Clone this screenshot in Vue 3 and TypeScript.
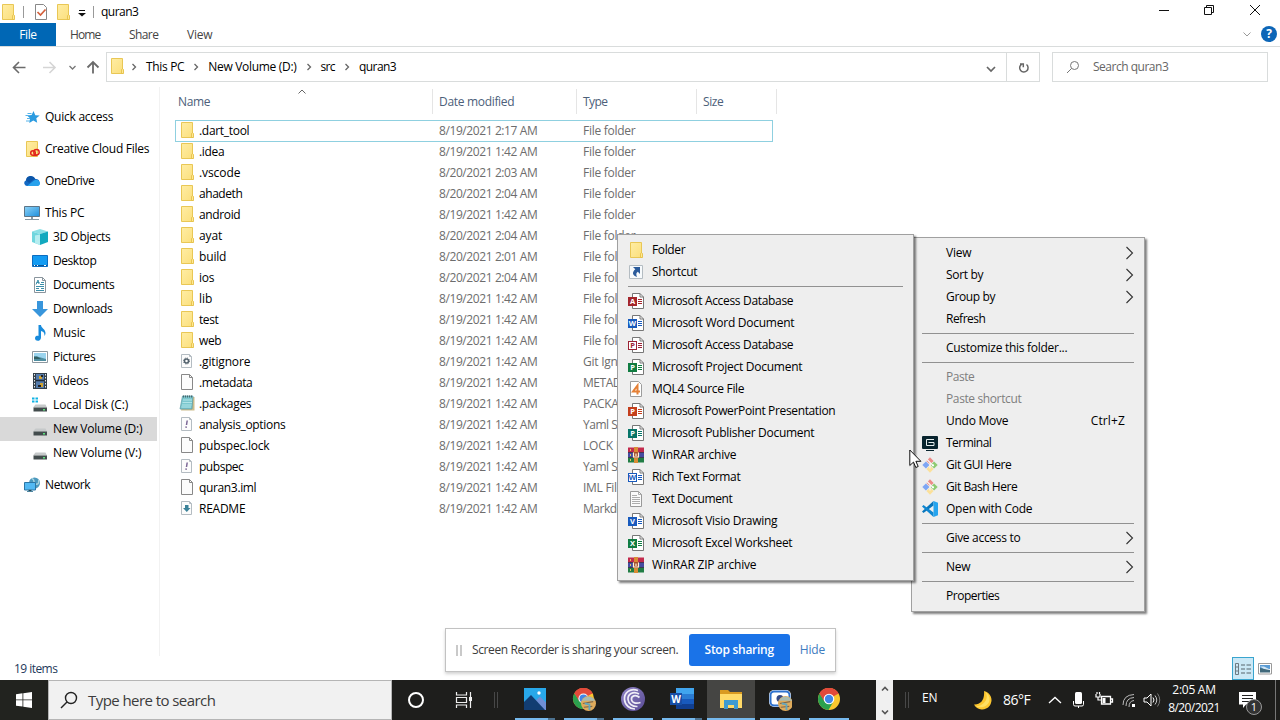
<script setup lang="ts">
import { ref, computed } from 'vue';

interface NavItem {
    icon: string;
    label: string;
    width: number;
    nested?: boolean;
    gap?: boolean;
    active?: boolean;
}

interface FileRow {
    icon: string;
    name: string;
    width: number;
    date: string;
    type: string;
    typeWidth: number;
}

interface MenuItem {
    label?: string;
    width?: number;
    icon?: string;
    badge?: { letter: string; color: string; outline?: boolean };
    disabled?: boolean;
    arrow?: boolean;
    shortcut?: string;
    separator?: boolean;
}

const vFit = {
    mounted: (el: HTMLElement, binding: { value: number }) => {
        const length = (el.textContent || '').length;
        if (!binding.value || !length) return;
        const width = el.getBoundingClientRect().width;
        el.style.letterSpacing = `${(binding.value + 0.3 - width) / length}px`;
    },
};

const navItems: NavItem[] = [
    { icon: 'star', label: 'Quick access', width: 68 },
    { icon: 'creative', label: 'Creative Cloud Files', width: 104, gap: true },
    { icon: 'onedrive', label: 'OneDrive', width: 49, gap: true },
    { icon: 'pc', label: 'This PC', width: 39, gap: true },
    { icon: 'cube', label: '3D Objects', width: 57, nested: true },
    { icon: 'desktop', label: 'Desktop', width: 43, nested: true },
    { icon: 'documents', label: 'Documents', width: 61, nested: true },
    { icon: 'download', label: 'Downloads', width: 59, nested: true },
    { icon: 'music', label: 'Music', width: 32, nested: true },
    { icon: 'picture', label: 'Pictures', width: 42, nested: true },
    { icon: 'video', label: 'Videos', width: 35, nested: true },
    { icon: 'disk-win', label: 'Local Disk (C:)', width: 75, nested: true },
    { icon: 'disk', label: 'New Volume (D:)', width: 89, nested: true, active: true },
    { icon: 'disk', label: 'New Volume (V:)', width: 88, nested: true },
    { icon: 'network', label: 'Network', width: 45, gap: true },
];

const folder = (name: string, width: number, date: string): FileRow => ({
    icon: 'folder', name, width, date, type: 'File folder', typeWidth: 52,
});

const files = ref<FileRow[]>([
    folder('.dart_tool', 50, '8/19/2021 2:17 AM'),
    folder('.idea', 25, '8/19/2021 1:42 AM'),
    folder('.vscode', 41, '8/20/2021 2:03 AM'),
    folder('ahadeth', 43, '8/20/2021 2:04 AM'),
    folder('android', 41, '8/19/2021 1:42 AM'),
    folder('ayat', 23, '8/20/2021 2:04 AM'),
    folder('build', 27, '8/20/2021 2:01 AM'),
    folder('ios', 15, '8/20/2021 2:04 AM'),
    folder('lib', 13, '8/19/2021 1:42 AM'),
    folder('test', 19, '8/19/2021 1:42 AM'),
    folder('web', 22, '8/19/2021 1:42 AM'),
    { icon: 'gear-file', name: '.gitignore', width: 51, date: '8/19/2021 1:42 AM', type: 'Git Ignore Source ...', typeWidth: 104 },
    { icon: 'file', name: '.metadata', width: 53, date: '8/19/2021 1:42 AM', type: 'METADATA File', typeWidth: 78 },
    { icon: 'notes', name: '.packages', width: 52, date: '8/19/2021 1:42 AM', type: 'PACKAGES File', typeWidth: 76 },
    { icon: 'yaml', name: 'analysis_options', width: 86, date: '8/19/2021 1:42 AM', type: 'Yaml Source File', typeWidth: 83 },
    { icon: 'file', name: 'pubspec.lock', width: 70, date: '8/19/2021 1:42 AM', type: 'LOCK File', typeWidth: 51 },
    { icon: 'yaml', name: 'pubspec', width: 44, date: '8/19/2021 1:42 AM', type: 'Yaml Source File', typeWidth: 83 },
    { icon: 'file', name: 'quran3.iml', width: 57, date: '8/19/2021 1:42 AM', type: 'IML File', typeWidth: 40 },
    { icon: 'markdown', name: 'README', width: 46, date: '8/19/2021 1:42 AM', type: 'Markdown Source...', typeWidth: 102 },
]);
const selected = ref('.dart_tool');
const itemCount = computed(() => `${files.value.length} items`);

const newMenu: MenuItem[] = [
    { label: 'Folder', width: 33, icon: 'folder' },
    { label: 'Shortcut', width: 45, icon: 'shortcut' },
    { separator: true },
    { label: 'Microsoft Access Database', width: 141, badge: { letter: 'A', color: '#a4262c' } },
    { label: 'Microsoft Word Document', width: 142, badge: { letter: 'W', color: '#185abd' } },
    { label: 'Microsoft Access Database', width: 141, badge: { letter: 'P', color: '#9b2335', outline: true } },
    { label: 'Microsoft Project Document', width: 150, badge: { letter: 'P', color: '#107c41' } },
    { label: 'MQL4 Source File', width: 92, icon: 'mql' },
    { label: 'Microsoft PowerPoint Presentation', width: 183, badge: { letter: 'P', color: '#c43e1c' } },
    { label: 'Microsoft Publisher Document', width: 162, badge: { letter: 'P', color: '#077568' } },
    { label: 'WinRAR archive', width: 84, icon: 'rar' },
    { label: 'Rich Text Format', width: 88, badge: { letter: 'W', color: '#185abd', outline: true } },
    { label: 'Text Document', width: 80, icon: 'text' },
    { label: 'Microsoft Visio Drawing', width: 125, badge: { letter: 'V', color: '#185abd' } },
    { label: 'Microsoft Excel Worksheet', width: 140, badge: { letter: 'X', color: '#107c41' } },
    { label: 'WinRAR ZIP archive', width: 104, icon: 'rar' },
];

const contextMenu: MenuItem[] = [
    { label: 'View', width: 25, arrow: true },
    { label: 'Sort by', width: 37, arrow: true },
    { label: 'Group by', width: 49, arrow: true },
    { label: 'Refresh', width: 39 },
    { separator: true },
    { label: 'Customize this folder...', width: 121 },
    { separator: true },
    { label: 'Paste', width: 28, disabled: true },
    { label: 'Paste shortcut', width: 75, disabled: true },
    { label: 'Undo Move', width: 62, shortcut: 'Ctrl+Z' },
    { label: 'Terminal', width: 45, icon: 'terminal' },
    { label: 'Git GUI Here', width: 65, icon: 'git' },
    { label: 'Git Bash Here', width: 71, icon: 'git' },
    { label: 'Open with Code', width: 86, icon: 'vscode' },
    { separator: true },
    { label: 'Give access to', width: 74, arrow: true },
    { separator: true },
    { label: 'New', width: 24, arrow: true },
    { separator: true },
    { label: 'Properties', width: 53 },
];

const menus = [
    { name: 'context', items: contextMenu },
    { name: 'new', items: newMenu },
];

const crumbs = [
    { label: 'This PC', width: 38 },
    { label: 'New Volume (D:)', width: 88 },
    { label: 'src', width: 14 },
    { label: 'quran3', width: 37 },
];

const apps = [
    { icon: 'app-photos', stacked: true },
    { icon: 'app-chrome-user', stacked: true },
    { icon: 'app-torrent' },
    { icon: 'app-word', stacked: true, letter: 'W' },
    { icon: 'app-explorer', active: true },
    { icon: 'app-recorder' },
    { icon: 'app-chrome' },
];
</script>

<template>
    <div class="screen">
        <svg class="sprite" width="0" height="0">
            <defs>
                <linearGradient id="g-blue" x1="0" y1="0" x2="1" y2="1">
                    <stop offset="0" stop-color="#8fd3f7" /><stop offset="1" stop-color="#1c8fdc" />
                </linearGradient>
                <linearGradient id="g-folder" x1="0" y1="0" x2="1" y2="1">
                    <stop offset="0" stop-color="#ffeda4" /><stop offset="1" stop-color="#fbdf7c" />
                </linearGradient>
                <linearGradient id="g-torrent" x1="0" y1="0" x2="1" y2="1">
                    <stop offset="0" stop-color="#8f83c4" /><stop offset="1" stop-color="#594b95" />
                </linearGradient>
            </defs>
            <symbol id="folder" viewBox="0 0 16 16">
                <path d="M2.500.5h11v10.800l.5.500v3.700H2.500z" fill="url(#g-folder)" stroke="#e9c755" />
                <path d="M12.500 15.500v-4l1-.7 1 .7v4z" fill="#ffe991" stroke="#e3bd42" stroke-width=".8" />
            </symbol>
            <symbol id="star" viewBox="0 0 16 16">
                <path d="M9.500 2l1.800 4.200 4.400.2-3.400 2.900.9 4.500-3.900-2.200L5.300 14l.8-4.700L3 6.500l4.600-.4z" fill="#2b9be0" />
                <path d="M3.500 4.500h4M1.500 6.500H5M3 9.500h3M2 12h4" stroke="#56b4ea" />
            </symbol>
            <symbol id="creative" viewBox="0 0 16 16">
                <path d="M2.500.5h11v15h-11z" fill="url(#g-folder)" stroke="#e9c755" />
                <circle cx="9" cy="12" r="2.300" fill="none" stroke="#e1261c" stroke-width="1.500" />
                <circle cx="12.500" cy="11.300" r="2.700" fill="none" stroke="#e1261c" stroke-width="1.500" />
                <path d="M9 14.500h4" stroke="#e1261c" stroke-width="1.300" />
            </symbol>
            <symbol id="onedrive" viewBox="0 0 16 16">
                <path d="M3 13a3 3 0 0 1-.8-5.800A5 5 0 0 1 11.500 6a3.600 3.600 0 0 1 1.500 7z" fill="#1268c3" />
                <path d="M2 7.200a4.800 4.800 0 0 1 9-1.700L5 10z" fill="#0c55a8" />
                <path d="M3 13l7-5.500a4 4 0 0 1 5.500 1.200A2.700 2.700 0 0 1 13 13z" fill="#27a1ec" />
            </symbol>
            <symbol id="pc" viewBox="0 0 16 16">
                <path d="M.5 1.500h15v10H.5z" fill="url(#g-blue)" stroke="#5d7587" />
                <path d="M7 12h2v2H7zM1 14h14v1H1z" fill="#8899a3" />
            </symbol>
            <symbol id="cube" viewBox="0 0 16 16">
                <path d="M0 2.500L8 0l8 2.500L8 5z" fill="#8be0e6" />
                <path d="M0 2.500L8 5v11l-8-3z" fill="#6fd6de" /><path d="M8 5l8-2.500V13l-8 3z" fill="#12a9bf" />
                <path d="M3 6.500l5-1V16l-5-2z" fill="#b5edf0" />
            </symbol>
            <symbol id="desktop" viewBox="0 0 16 16">
                <path d="M.5 2.500h15v11H.5z" fill="#139bf2" stroke="#0b6dc1" />
                <path d="M1 12.500h14" stroke="#0a5599" /><path d="M2 12.500h1M5 12.500h1M12 12.500h2" stroke="#fff" />
            </symbol>
            <symbol id="documents" viewBox="0 0 16 16">
                <path d="M2.500.5h8l3 3v12h-11z" fill="#fff" stroke="#8a959d" /><path d="M10.500.5v3h3" fill="none" stroke="#8a959d" />
                <path d="M4 7.500L6 3l1 4M4.500 5.500h3M9 5.500h3M8 7.500h4M4 9.500h8M4 13.500h8M4 11.500h3M9 11.500h3" fill="none" stroke="#3b8ea9" />
            </symbol>
            <symbol id="download" viewBox="0 0 16 16"><path d="M5 0h6v8h5l-8 8-8-8h5z" fill="#3896dc" /></symbol>
            <symbol id="music" viewBox="0 0 16 16"><path d="M6.500 0H9c0 3 4.500 4 4.500 8 0 1.500-.7 2.500-1.200 3C13 7.500 11 6.500 9 6v6.500c0 4.300-6 4.300-6 .8C3 10.500 6 10.500 6.500 11z" fill="#188bdc" /></symbol>
            <symbol id="picture" viewBox="0 0 16 16">
                <path d="M.5 2.500h15v11H.5z" fill="#fff" stroke="#8d989f" /><path d="M2 4h12v8H2z" fill="#9bd4ee" />
                <path d="M2 7l5 1 7 2v2H2z" fill="#4f8ea0" /><path d="M2 8l3-.5 4 2.500H2z" fill="#315f63" />
            </symbol>
            <symbol id="video" viewBox="0 0 16 16">
                <path d="M1 0h14v16H1z" fill="#333f49" /><path d="M4 1h8v14H4z" fill="#557cad" />
                <path d="M4 7.500h8" stroke="#1d2b3b" stroke-width="1.500" /><path d="M7 3h3v3H7zM8 10h3v4H8z" fill="#d0a230" /><path d="M9 2h2v2H9zM6 12h3v2H6z" fill="#232323" />
                <path d="M2.500 1v15M13.500 1v15" stroke="#e6eaec" stroke-dasharray="1.500 1.500" />
            </symbol>
            <symbol id="disk" viewBox="0 0 16 16">
                <path d="M3.500 7.500h10l1.500 3H1z" fill="#c6c9ca" /><path d="M1.500 10.500h13.500v4H1.500z" fill="#434c4d" /><path d="M11 12h2v1.500h-2z" fill="#5de27c" />
            </symbol>
            <symbol id="disk-win" viewBox="0 0 16 16">
                <path d="M3.500 7.500h10l1.500 3H1z" fill="#c6c9ca" /><path d="M1.500 10.500h13.500v4H1.500z" fill="#434c4d" /><path d="M11 12h2v1.500h-2z" fill="#5de27c" />
                <path d="M0 .5h2.500v2H0zM3.500.5H6v2H3.500zM0 3.500h2.500v2H0zM3.500 3.500H6v2H3.500z" fill="#12b3e4" />
            </symbol>
            <symbol id="network" viewBox="0 0 16 16">
                <circle cx="10.500" cy="6" r="5.500" fill="#4b98bd" /><path d="M8 1.500C12 3 8 6 12 7s2-4 3-4" fill="none" stroke="#a7d3df" stroke-width="1.500" />
                <path d="M.5 5.500h11v7.500H.5z" fill="#52b9f3" stroke="#2c76a5" /><path d="M4.500 13h3v1.500h-3zM3 14.500h6" stroke="#50869f" />
            </symbol>
            <symbol id="file" viewBox="0 0 16 16"><path d="M2.500.5h8l3 3v12h-11z" fill="#fcfcfc" stroke="#888" /><path d="M10.500.5v3h3" fill="none" stroke="#888" /></symbol>
            <symbol id="small-page" viewBox="0 0 16 16"><path d="M2.500 1.500h8l2 2v11h-10z" fill="#fcfcfc" stroke="#b4bcc2" /><path d="M10.500 1.500v2h2" fill="none" stroke="#b4bcc2" /></symbol>
            <symbol id="gear-file" viewBox="0 0 16 16">
                <use href="#small-page" /><circle cx="7.500" cy="8" r="2" fill="none" stroke="#52616c" stroke-width="1.500" />
                <circle cx="7.500" cy="8" r="3" fill="none" stroke="#52616c" stroke-dasharray="1.180 1.180" />
            </symbol>
            <symbol id="yaml" viewBox="0 0 16 16"><use href="#small-page" /><path d="M8.200 4.500L7.500 9M7.200 10.300l-.2 1.500" stroke="#7b6796" stroke-width="1.500" /></symbol>
            <symbol id="markdown" viewBox="0 0 16 16"><use href="#small-page" /><path d="M6 5h3.500v3h2l-3.700 4L4 8h2z" fill="#3b8299" /></symbol>
            <symbol id="notes" viewBox="0 0 16 16">
                <path d="M4 2h11.500v13.500H2z" fill="#cdbd8d" /><path d="M3.500 1H14l-1 13H1z" fill="#7bc7ce" stroke="#5a9aa3" stroke-width=".7" />
                <path d="M4 5h9M3.500 7.500H13M3 10h9.500M2.500 12H12" stroke="#b1e4e7" /><path d="M4 1.500h10" stroke="#49676d" stroke-width="2" stroke-dasharray="1 1" />
            </symbol>
            <symbol id="shortcut" viewBox="0 0 16 16"><path d="M1.500 1.500h13v13h-13z" fill="#f7fafc" stroke="#b4bcc2" /><path d="M5 3h7v7L9.800 7.800C8 9 8 10.500 9 13 4 11.500 4 8 7.300 5.300z" fill="#2b5b9b" /></symbol>
            <symbol id="mql" viewBox="0 0 16 16"><path d="M2.500.5h8l3 3v12h-11z" fill="#fff" stroke="#9c9c9c" /><path d="M9.500 13.500V4.500L5 10.500h7" fill="none" stroke="#e58137" stroke-width="2" /></symbol>
            <symbol id="text" viewBox="0 0 16 16"><path d="M2.500.5h8l3 3v12h-11z" fill="#fafafa" stroke="#999" /><path d="M10.500.5v3h3M4 4.500h5M4 6.500h8M4 8.500h8M4 10.500h8M4 12.500h8" fill="none" stroke="#999" stroke-width=".8" /></symbol>
            <symbol id="rar" viewBox="0 0 16 16">
                <path d="M0 .5h16v5H0z" fill="#c32a4d" /><path d="M0 5.500h16v5H0z" fill="#454ba0" /><path d="M0 10.500h16v5H0z" fill="#217d45" />
                <path d="M0 5.500h16M0 10.500h16" stroke="#32273f" stroke-width=".8" /><path d="M2.500 2v2M2.500 7v2M2.500 12v2" stroke="#e0c65a" />
                <path d="M6 0h4v16H6z" fill="#d98c35" /><path d="M5 5h6v6H5z" fill="#a44c27" /><path d="M5.500 5.500V10h5V5.500M8 6.500V9" fill="none" stroke="#fff3dd" stroke-width="1.200" />
            </symbol>
            <symbol id="terminal" viewBox="0 0 16 16"><rect y="1" width="16" height="13" rx="1" fill="#08242e" /><path d="M12 4.500H4.500v6H12M6.500 7.500H12v3" fill="none" stroke="#e6eeee" /><path d="M4 15.500h8" stroke="#08242e" /></symbol>
            <symbol id="git" viewBox="0 0 16 16">
                <path d="M8 .3l3.600 3.600L8 7.500 4.400 3.900z" fill="#ed8b88" /><path d="M.3 8l3.600-3.600L7.500 8l-3.600 3.600z" fill="#7ea6f4" />
                <path d="M15.700 8l-3.600-3.600L8.500 8l3.600 3.600z" fill="#8fcb72" /><path d="M8 15.700l3.600-3.600L8 8.500l-3.600 3.600z" fill="#fbe09a" />
                <path d="M5 2.500l6 6M8 5.500v6" stroke="#f5f5f1" stroke-width="1.200" /><circle cx="11" cy="8.300" r="1.100" fill="#fff" />
            </symbol>
            <symbol id="vscode" viewBox="0 0 16 16">
                <path d="M11.500 0v4.500L1.500 12 0 10.500z" fill="#0876bd" /><path d="M0 5.500L1.500 4l10 7.500V16z" fill="#0f86d0" />
                <path d="M11.500 0L16 1.800v12.400L11.500 16z" fill="#26a4ee" />
            </symbol>
            <symbol id="app-photos" viewBox="0 0 24 24"><path d="M1 1h22v22H1z" fill="#28a8ea" /><path d="M10 16l7-6.500 6 6V23H12z" fill="#6f8ed5" /><path d="M1 15l7-7 14 15H1z" fill="#123d72" /><circle cx="16" cy="6" r="1.700" fill="#fff" /></symbol>
            <symbol id="app-chrome" viewBox="0 0 24 24">
                <circle cx="12" cy="12" r="11" fill="#f9c72f" /><path d="M12 12L2.470 6.500A11 11 0 0 1 21.530 6.500z" fill="#e24a3b" />
                <path d="M12 12h-5.500L2.470 6.500A11 11 0 0 0 11.500 23l5-8.500z" fill="#2ba14e" /><path d="M12 7h9.700A11 11 0 0 0 2.470 6.500L7 14z" fill="#e24a3b" />
                <circle cx="12" cy="12" r="5.300" fill="#fff" /><circle cx="12" cy="12" r="4.200" fill="#4286e8" />
            </symbol>
            <symbol id="user" viewBox="0 0 16 16"><circle cx="8" cy="8" r="8" fill="#dfab5b" /><path d="M1 5a8 8 0 0 1 14 0z" fill="#a9bbb0" /><path d="M2 8l11-2M3 12l9-1" stroke="#7e694d" stroke-width="1.300" /><path d="M4 8l5 1v6" stroke="#64a5bb" stroke-width="2" fill="none" /></symbol>
            <symbol id="app-chrome-user" viewBox="0 0 24 24"><use href="#app-chrome" width="23" height="23" /><use href="#user" x="9" y="9" width="15" height="15" /></symbol>
            <symbol id="app-torrent" viewBox="0 0 24 24">
                <circle cx="12" cy="12" r="12" fill="url(#g-torrent)" />
                <path d="M17 3.500C9 .5 3 6 3.500 12.500 4 18.500 9 22 14 22M18 7C12 3.500 6.500 7.500 7 12.500c.5 4.500 4.500 7.300 9.500 7M18.500 10.500C14.500 7 10 9 10.500 12.500c.5 3.500 4.500 4.500 9 3" fill="none" stroke="#efedf6" stroke-width="1.700" />
            </symbol>
            <symbol id="app-word" viewBox="0 0 24 24"><path d="M6 1h18v6H6z" fill="#41a5ee" /><path d="M6 7h18v5H6z" fill="#2b7cd3" /><path d="M6 12h18v5H6z" fill="#185abd" /><path d="M6 17h18v5H6z" fill="#103f91" /><path d="M0 6h12v12H0z" fill="#174ea6" /></symbol>
            <symbol id="app-explorer" viewBox="0 0 24 24"><path d="M1 3h8l2 2h12v6H1z" fill="#d99a21" /><path d="M1 7h22v14H1z" fill="#ffda68" /><path d="M5 22v-9h14v9h-4v-4H9v4z" fill="#3f9bd1" /></symbol>
            <symbol id="app-recorder" viewBox="0 0 24 24">
                <rect x="1" y="3" width="22" height="17" rx="5" fill="#fff" /><rect x="2.500" y="4.500" width="19" height="14" rx="3.500" fill="#fff" stroke="#2c71ce" stroke-width="2" />
                <circle cx="12" cy="11.500" r="3.500" fill="#344984" /><use href="#user" x="10" y="9" width="15" height="15" />
            </symbol>
        </svg>

        <header class="title-bar">
            <svg class="icon"><use href="#folder" /></svg>
            <i class="tick first"></i>
            <svg class="icon check" viewBox="0 0 16 16"><path d="M2.500.5h8l3 3v12h-11z" fill="#fff" stroke="#888" /><path d="M4.500 8l3 3 5-5.500" fill="none" stroke="#d4603c" stroke-width="1.700" /></svg>
            <svg class="icon"><use href="#folder" /></svg>
            <svg class="customize" viewBox="0 0 8 8"><path d="M1 1.500h6" stroke="#111" /><path d="M0 4h8L4 7.500z" fill="#111" /></svg>
            <i class="tick"></i>
            <span v-fit="37" class="title">quran3</span>
            <div class="window-buttons">
                <svg viewBox="0 0 12 12"><path d="M1 6.500h10" /></svg>
                <svg viewBox="0 0 12 12"><path d="M1.500 3.500h7v7h-7zM3.500 3.500v-2h7v7h-2" /></svg>
                <svg viewBox="0 0 12 12"><path d="M1 1l10 10M11 1L1 11" /></svg>
            </div>
        </header>

        <nav class="ribbon">
            <span class="tab file"><span v-fit="17">File</span></span>
            <span class="tab home"><span v-fit="30">Home</span></span>
            <span class="tab share"><span v-fit="29">Share</span></span>
            <span class="tab view"><span v-fit="25">View</span></span>
            <svg class="collapse" viewBox="0 0 8 8"><path d="M.5 2.500L4 6l3.500-3.500" fill="none" stroke="#999" /></svg>
            <span class="help">?</span>
        </nav>

        <div class="address-row">
            <svg class="nav-arrows" viewBox="0 0 94 20" fill="none">
                <path d="M13.500 10.500h12M19 5l-5.500 5.500 5.500 5.500" stroke="#6b6b6b" stroke-width="1.600" />
                <path d="M43 10.500h12M49.500 5l5.500 5.500-5.500 5.500" stroke="#d5d5d5" stroke-width="1.600" />
                <path d="M69.500 9l3 3 3-3" stroke="#777" stroke-width="1.300" />
                <path d="M93 16.500V5M87.500 10.500L93 5l5.500 5.500" stroke="#6b6b6b" stroke-width="1.800" />
            </svg>
            <div class="address">
                <svg class="icon"><use href="#folder" /></svg>
                <template v-for="crumb in crumbs" :key="crumb.label">
                    <svg class="crumb-arrow" viewBox="0 0 6 8"><path d="M1.500 1l3 3-3 3" fill="none" stroke="#666" stroke-width="1.300" /></svg>
                    <span v-fit="crumb.width">{{ crumb.label }}</span>
                </template>
                <svg class="drop" viewBox="0 0 10 10"><path d="M1 3l4 4 4-4" fill="none" stroke="#666" stroke-width="1.700" /></svg>
                <div class="refresh">
                    <svg viewBox="0 0 12 12"><path d="M8.500 2.500a4.200 4.200 0 1 1-5-.2M2 2h3.300v3.300" fill="none" stroke="#666" stroke-width="1.500" /></svg>
                </div>
            </div>
            <div class="search">
                <svg viewBox="0 0 14 14"><circle cx="8.500" cy="5.500" r="4" /><path d="M5.500 8.500L1 13" /></svg>
                <span v-fit="75">Search quran3</span>
            </div>
        </div>

        <main class="body">
            <aside class="sidebar">
                <div
                    v-for="item in navItems"
                    :key="item.label"
                    class="nav-item"
                    :class="{ nested: item.nested, gap: item.gap, active: item.active }"
                >
                    <svg class="icon"><use :href="`#${item.icon}`" /></svg>
                    <span v-fit="item.width">{{ item.label }}</span>
                </div>
            </aside>
            <section class="listing">
                <div class="columns">
                    <span class="col-name"><span v-fit="32">Name</span></span>
                    <span class="col-date"><span v-fit="75">Date modified</span></span>
                    <span class="col-type"><span v-fit="24">Type</span></span>
                    <span class="col-size"><span v-fit="20">Size</span></span>
                    <svg class="sort" viewBox="0 0 8 5"><path d="M.5 4.500L4 1l3.500 3.500" fill="none" stroke="#666" /></svg>
                </div>
                <div v-for="file in files" :key="file.name" class="row" :class="{ selected: file.name === selected }">
                    <span class="cell-name">
                        <svg class="icon"><use :href="`#${file.icon}`" /></svg>
                        <span v-fit="file.width">{{ file.name }}</span>
                    </span>
                    <span class="cell-date"><span v-fit="98">{{ file.date }}</span></span>
                    <span class="cell-type"><span v-fit="file.typeWidth">{{ file.type }}</span></span>
                </div>
            </section>
        </main>

        <footer class="status">
            <span v-fit="43">{{ itemCount }}</span>
            <div class="view-modes">
                <span class="details">
                    <svg viewBox="0 0 18 14" fill="none"><path d="M1.500 1.500h3v11h-3zM1.500 5h3M1.500 9h3" stroke="#6d7b83" /><path d="M7 3h4M12.500 3H17M7 7h4M12.500 7H17M7 11h4M12.500 11H17" stroke="#56646c" /></svg>
                </span>
                <svg class="thumbs" viewBox="0 0 14 12"><path d="M.5.5h13v10.500H.5z" fill="#fff" stroke="#9a9a9a" /><path d="M2 2h10v4H2z" fill="#5a9bd4" /><path d="M2 5l10 2v2.500H2z" fill="#41697b" /><path d="M2 3.500h4l6 3-6-.5z" fill="#d2e7f5" /></svg>
            </div>
        </footer>

        <div
            v-for="menu in menus"
            :key="menu.name"
            class="menu"
            :class="menu.name"
        >
            <template v-for="(item, idx) in menu.items" :key="idx">
                <hr v-if="item.separator" />
                <div v-else class="menu-item" :class="{ disabled: item.disabled }">
                    <span class="menu-icon">
                        <svg v-if="item.badge" class="icon" viewBox="0 0 16 16">
                            <path d="M4.500.5H12L15.500 4v11.500h-11z" fill="#fff" stroke="#777" />
                            <path d="M12 .5V4h3.500" fill="none" stroke="#777" />
                            <path d="M10 6.500h4M10 8.500h4M10 10.500h4" :stroke="item.badge.color" />
                            <rect x=".5" y="4.500" width="8" height="8" :fill="item.badge.outline ? '#fff' : item.badge.color" :stroke="item.badge.color" />
                            <text x="4.500" y="11.300" class="badge-letter" :fill="item.badge.outline ? item.badge.color : '#fff'">{{ item.badge.letter }}</text>
                        </svg>
                        <svg v-else-if="item.icon" class="icon"><use :href="`#${item.icon}`" /></svg>
                    </span>
                    <span v-fit="item.width">{{ item.label }}</span>
                    <span v-if="item.shortcut" class="hotkey"><span v-fit="34">{{ item.shortcut }}</span></span>
                    <svg v-if="item.arrow" class="arrow" viewBox="0 0 8 14"><path d="M.5 1l6 6-6 6" fill="none" stroke="#333" stroke-width="1.100" /></svg>
                </div>
            </template>
        </div>

        <svg class="cursor" viewBox="0 0 13 20"><path d="M.8 1v15.500l3.700-3.400 2.300 5.400 2.400-1-2.300-5.200h5z" fill="#fff" stroke="#111" /></svg>

        <div class="sharing">
            <i class="grip"></i>
            <span v-fit="206" class="sharing-text">Screen Recorder is sharing your screen.</span>
            <button class="stop"><span v-fit="69">Stop sharing</span></button>
            <a class="hide"><span v-fit="25">Hide</span></a>
        </div>

        <div class="taskbar">
            <div class="start">
                <svg viewBox="0 0 16 16"><path d="M0 2.200l6.500-.9v6.200H0zM7.300 1.200L16 0v7.500H7.300zM0 8.300h6.500v6.300L0 13.700zM7.300 8.300H16V16l-8.700-1.200z" fill="#fff" /></svg>
            </div>
            <div class="task-search">
                <svg viewBox="0 0 18 18"><circle cx="11" cy="7" r="5.500" /><path d="M7 11l-6 6" /></svg>
                <span v-fit="127">Type here to search</span>
            </div>
            <div class="task-button"><i class="cortana"></i></div>
            <div class="task-button">
                <svg class="task-view" viewBox="0 0 18 18" fill="none" stroke="#eee"><path d="M1.500 1v3h10V1M1.500 17v-3h10v3M1.500 6.500h10v5h-10zM15.500 1v16" stroke-width="1.200" /><path d="M14 6h3v4h-3z" fill="#eee" stroke="none" /></svg>
            </div>
            <i class="handle"></i>
            <div class="apps">
                <div v-for="app in apps" :key="app.icon" class="app" :class="{ active: app.active, stacked: app.stacked }">
                    <svg viewBox="0 0 24 24">
                        <use :href="`#${app.icon}`" />
                        <text v-if="app.letter" x="6" y="15.600" class="app-letter">{{ app.letter }}</text>
                    </svg>
                </div>
            </div>
            <div class="scroller">
                <svg viewBox="0 0 8 6"><path d="M1 4.500l3-3 3 3" /></svg>
                <svg viewBox="0 0 8 6"><path d="M1 1.500l3 3 3-3" /></svg>
            </div>
            <i class="handle second"></i>
            <span class="lang"><span v-fit="15">EN</span></span>
            <svg class="moon" viewBox="0 0 20 20"><path d="M11 1a9.300 9.300 0 1 1-10 13.500c6 .5 11-4 10-13.500z" fill="#fdc72f" /><path d="M12.500 2c4 7-2 14-9.500 14.500 10 4 19-7 9.500-14.500z" fill="#ffe064" /></svg>
            <span class="temp"><span v-fit="27">86°F</span></span>
            <svg class="tray" viewBox="0 0 114 20" fill="none" stroke="#fff">
                <path d="M1 13l6-5.500 6 5.500" stroke-width="1.300" />
                <rect x="27" y="2" width="7" height="12" rx="1.500" fill="#fff" stroke="none" /><path d="M25.500 11v3.500q0 1.500 1.500 1.500h7q1.500 0 1.500-1.500V11M30.500 16v2" />
                <path d="M53.500 6.500h9v7.500h-9zM62.500 9h2v3h-2z" stroke-width="1.300" /><path d="M48 4v3h4V4M50 7v3h3M49 2v2M51.500 2v2" stroke-width="1.200" /><path d="M54.500 8h3v5h-3z" fill="#fff" stroke="none" />
                <path d="M75 15Q75 5 86 4.500M78 16Q78 8 86 7.500M81 17Q81 11 86 10.500" stroke="#bbb" /><path d="M84 17v-3h3v3z" fill="#fff" stroke="none" />
                <path d="M96 8h3l4-4v12l-4-4h-3zM105 7.500q2 2.500 0 5" /><path d="M107 5.500q3.500 4.500 0 9" stroke="#ccc" /><path d="M109.500 3.500q4.500 6.500 0 13" stroke="#777" />
            </svg>
            <div class="clock"><span v-fit="43">2:05 AM</span><span v-fit="51">8/20/2021</span></div>
            <div class="notices">
                <svg viewBox="0 0 17 18"><path d="M0 0h17v12.500H7L4 16v-3.500H0z" fill="#fff" /><path d="M3 3.500h11M3 6.500h11M3 9.500h7" stroke="#222" /></svg>
                <span class="count">1</span>
            </div>
            <i class="peek"></i>
        </div>
    </div>
</template>

<style>
body {
    overflow: hidden;
}
</style>

<style scoped>
.screen {
    position: relative;
    display: flex;
    flex-direction: column;
    box-sizing: border-box;
    width: 1280px;
    height: 720px;
    overflow: hidden;
    background: #fff;
    color: #000;
    font: 12px/16px 'Open Sans', 'Noto Sans', sans-serif;
    white-space: nowrap;
}

.screen * {
    box-sizing: border-box;
}

svg {
    display: block;
    flex: none;
}

.sprite {
    position: absolute;
}

.icon {
    width: 16px;
    height: 16px;
}

.title-bar {
    display: flex;
    align-items: center;
    height: 23px;
}

.tick {
    width: 1px;
    height: 12px;
    margin-left: 7px;
    background: #999;
}

.tick.first {
    margin: 0 9px 0 7px;
}

.check {
    margin-right: 6px;
}

.customize {
    width: 8px;
    height: 8px;
    margin: 3px 0 0 7px;
}

.title {
    margin-left: 7px;
}

.window-buttons {
    display: flex;
    gap: 33px;
    margin: -3px 19px 0 auto;
}

.window-buttons svg {
    width: 12px;
    height: 12px;
    fill: none;
    stroke: #111;
}

.window-buttons svg:last-child {
    margin-left: 1px;
}

.ribbon {
    display: flex;
    height: 24px;
    border-bottom: 1px solid #d9dcdc;
    color: #444;
}

.tab {
    display: flex;
    align-items: center;
    padding-left: 14px;
    width: 59px;
}

.file {
    justify-content: center;
    width: 56px;
    padding: 0;
    background: #0067b5;
    color: #fff;
}

.share {
    width: 57px;
}

.view {
    padding-left: 15px;
}

.collapse {
    width: 8px;
    height: 8px;
    margin: 7px 10px 0 auto;
}

.help {
    width: 16px;
    height: 16px;
    margin: 3px 3px 0 0;
    border-radius: 50%;
    background: #0d66b7;
    color: #fff;
    font-weight: 700;
    text-align: center;
}

.address-row {
    display: flex;
    align-items: center;
    height: 40px;
    padding-right: 12px;
}

.nav-arrows {
    width: 94px;
    height: 20px;
    margin-right: 12px;
    overflow: visible;
}

.address,
.search {
    display: flex;
    align-items: center;
    height: 30px;
    border: 1px solid #d9dcdc;
}

.address {
    width: 934px;
    padding-left: 2px;
}

.address .icon {
    margin-top: -2px;
}

.crumb-arrow {
    width: 6px;
    height: 8px;
    margin: 0 9px;
}

.address .icon + .crumb-arrow {
    margin-left: 6px;
}

.drop {
    width: 10px;
    height: 10px;
    margin: 3px 10px 0 auto;
}

.refresh {
    display: flex;
    align-items: center;
    justify-content: center;
    width: 33px;
    height: 28px;
    padding-left: 2px;
    border-left: 1px solid #d9dcdc;
}

.refresh svg {
    width: 12px;
    height: 12px;
    margin-top: 2px;
}

.search {
    flex: 1;
    margin-left: 12px;
    padding-left: 13px;
    color: #666;
}

.search svg {
    width: 14px;
    height: 14px;
    margin-right: 13px;
    fill: none;
    stroke: #777;
}

.body {
    display: flex;
    height: 569px;
}

.sidebar {
    width: 160px;
    padding-top: 18px;
    border-right: 1px solid #f2f2f2;
}

.nav-item {
    display: flex;
    align-items: center;
    gap: 5px;
    width: 157px;
    height: 24px;
    padding-left: 24px;
}

.nav-item.gap {
    margin-top: 8px;
}

.nav-item.nested {
    padding-left: 32px;
}

.nav-item.active {
    background: #d9d9d9;
}

.listing {
    width: 620px;
    padding-left: 15px;
}

.columns {
    position: relative;
    display: flex;
    height: 25px;
    margin: 2px 0 6px;
    color: #4c607a;
}

.columns > span {
    display: flex;
    align-items: center;
    padding-left: 6px;
    border-right: 1px solid #e5e5e5;
}

.columns .col-name {
    width: 258px;
    padding-left: 3px;
}

.col-date {
    width: 144px;
}

.col-type {
    width: 120px;
}

.col-size {
    width: 80px;
}

.sort {
    position: absolute;
    left: 123px;
    top: 0;
    width: 8px;
    height: 5px;
}

.row {
    display: flex;
    align-items: center;
    width: 598px;
    height: 21px;
    border: 1px solid transparent;
    color: #6d6d6d;
}

.row.selected {
    height: 22px;
    margin-bottom: -1px;
    border-color: #8fd0e0;
}

.row .icon {
    margin-top: -1px;
}

.cell-name {
    display: flex;
    gap: 4px;
    width: 263px;
    padding-left: 3px;
    color: #000;
}

.cell-date {
    width: 144px;
}

.status {
    display: flex;
    align-items: center;
    justify-content: space-between;
    height: 24px;
    padding: 1px 8px 0 14px;
    color: #1e395b;
}

.view-modes {
    display: flex;
    align-items: center;
    gap: 4px;
}

.details {
    display: flex;
    align-items: center;
    justify-content: center;
    width: 22px;
    height: 23px;
    border: 1px solid #39a5cf;
    background: #cbe8f6;
}

.details svg {
    width: 18px;
    height: 14px;
}

.thumbs {
    width: 14px;
    height: 12px;
}

.menu {
    position: absolute;
    padding: 4px 3px;
    border: 1px solid #a0a0a0;
    background: #eee;
    box-shadow: 2px 2px 2px rgba(0, 0, 0, 0.5);
}

.menu.context {
    left: 911px;
    top: 237px;
    width: 234px;
}

.menu.new {
    left: 617px;
    top: 234px;
    width: 297px;
}

.menu hr {
    height: 1px;
    margin: 3px 7px;
    border: 0;
    background: #919191;
}

.menu-item {
    display: flex;
    align-items: center;
    height: 22px;
    padding-right: 7px;
}

.menu-icon {
    width: 31px;
    padding-left: 7px;
}

.menu-item.disabled {
    color: #7e7e7e;
}

.badge-letter {
    font: 700 7.5px 'Open Sans', sans-serif;
    text-anchor: middle;
}

.hotkey {
    margin: 0 9px 0 auto;
}

.arrow {
    width: 8px;
    height: 14px;
    margin-left: auto;
}

.cursor {
    position: absolute;
    left: 909px;
    top: 449px;
    width: 13px;
    height: 20px;
}

.sharing {
    position: absolute;
    left: 445px;
    top: 628px;
    display: flex;
    align-items: center;
    width: 391px;
    height: 44px;
    padding-left: 10px;
    border: 1px solid #c2c2c2;
    background: #fff;
    box-shadow: 0 2px 3px rgba(0, 0, 0, 0.18);
}

.grip {
    width: 6px;
    height: 11px;
    border: solid #c9c9c9;
    border-width: 0 2px;
}

.sharing-text {
    margin-left: 10px;
    color: #3c3c3c;
}

.stop {
    width: 101px;
    height: 32px;
    margin-left: auto;
    padding: 0;
    border: 0;
    border-radius: 3px;
    background: #1a73e8;
    color: #fff;
    font: 600 12px/16px 'Open Sans', sans-serif;
}

.stop span,
.hide span {
    display: inline-block;
}

.hide {
    margin: 0 10px;
    color: #3e7cc0;
}

.taskbar {
    display: flex;
    height: 40px;
    background: #1e1e1c;
    color: #fff;
}

.start {
    display: flex;
    align-items: center;
    justify-content: center;
    width: 48px;
    background: #22231f;
}

.start svg {
    width: 16px;
    height: 16px;
}

.task-search {
    display: flex;
    align-items: center;
    width: 344px;
    padding-left: 11px;
    border: 1px solid #b5b5b5;
    background: #f1f1f1;
    color: #3c3c3c;
    font-size: 15px;
    line-height: 20px;
}

.task-search svg {
    width: 18px;
    height: 18px;
    margin-right: 10px;
    fill: none;
    stroke: #222;
    stroke-width: 1.4;
}

.task-button {
    display: flex;
    align-items: center;
    justify-content: center;
    width: 48px;
}

.cortana {
    width: 16px;
    height: 16px;
    border: 2px solid #fff;
    border-radius: 50%;
}

.task-view {
    width: 18px;
    height: 18px;
}

.handle {
    width: 4px;
    height: 16px;
    margin: 12px 0 0 6px;
    border: solid #484848;
    border-width: 0 1px;
}

.handle.second {
    margin-left: 12px;
}

.apps {
    display: flex;
    gap: 9px;
    width: 378px;
    padding-left: 17px;
}

.app {
    display: flex;
    align-items: center;
    justify-content: center;
    width: 40px;
    border-bottom: 2px solid #76b9ed;
}

.app.stacked {
    border-image: linear-gradient(90deg, #76b9ed 32px, #4c7290 32px) 2;
    border-width: 0 0 2px;
    border-style: solid;
}

.app.active {
    width: 48px;
    margin: 0 -4px;
    background: #454543;
}

.app svg {
    width: 24px;
    height: 24px;
}

.app-letter {
    font: 700 10px 'Open Sans', sans-serif;
    text-anchor: middle;
    fill: #fff;
}

.scroller {
    display: flex;
    flex-direction: column;
    align-items: center;
    justify-content: space-between;
    width: 17px;
    padding: 6px 0 5px;
    background: #f0f0f0;
}

.scroller svg {
    width: 8px;
    height: 6px;
    fill: none;
    stroke: #555;
    stroke-width: 1.6;
}

.lang {
    width: 51px;
    margin-left: 13px;
    padding-top: 10px;
}

.moon {
    width: 20px;
    height: 20px;
    margin-top: 10px;
}

.temp {
    margin: 11px 0 0 10px;
    width: 45px;
    font-size: 14px;
    line-height: 18px;
}

.lang span,
.temp span {
    display: inline-block;
}

.tray {
    width: 114px;
    height: 20px;
    margin-top: 10px;
}

.clock {
    display: flex;
    flex-direction: column;
    align-items: center;
    gap: 2px;
    width: 64px;
    padding-top: 2px;
}

.notices {
    position: relative;
    margin: 12px 0 0 13px;
}

.notices svg {
    width: 17px;
    height: 18px;
}

.count {
    position: absolute;
    left: 7px;
    top: 7px;
    width: 16px;
    height: 16px;
    border: 1px solid #999;
    border-radius: 50%;
    background: #333;
    font-size: 11px;
    line-height: 14px;
    text-align: center;
}

.peek {
    width: 1px;
    height: 40px;
    margin: 0 4px 0 auto;
    background: #777;
}
</style>
